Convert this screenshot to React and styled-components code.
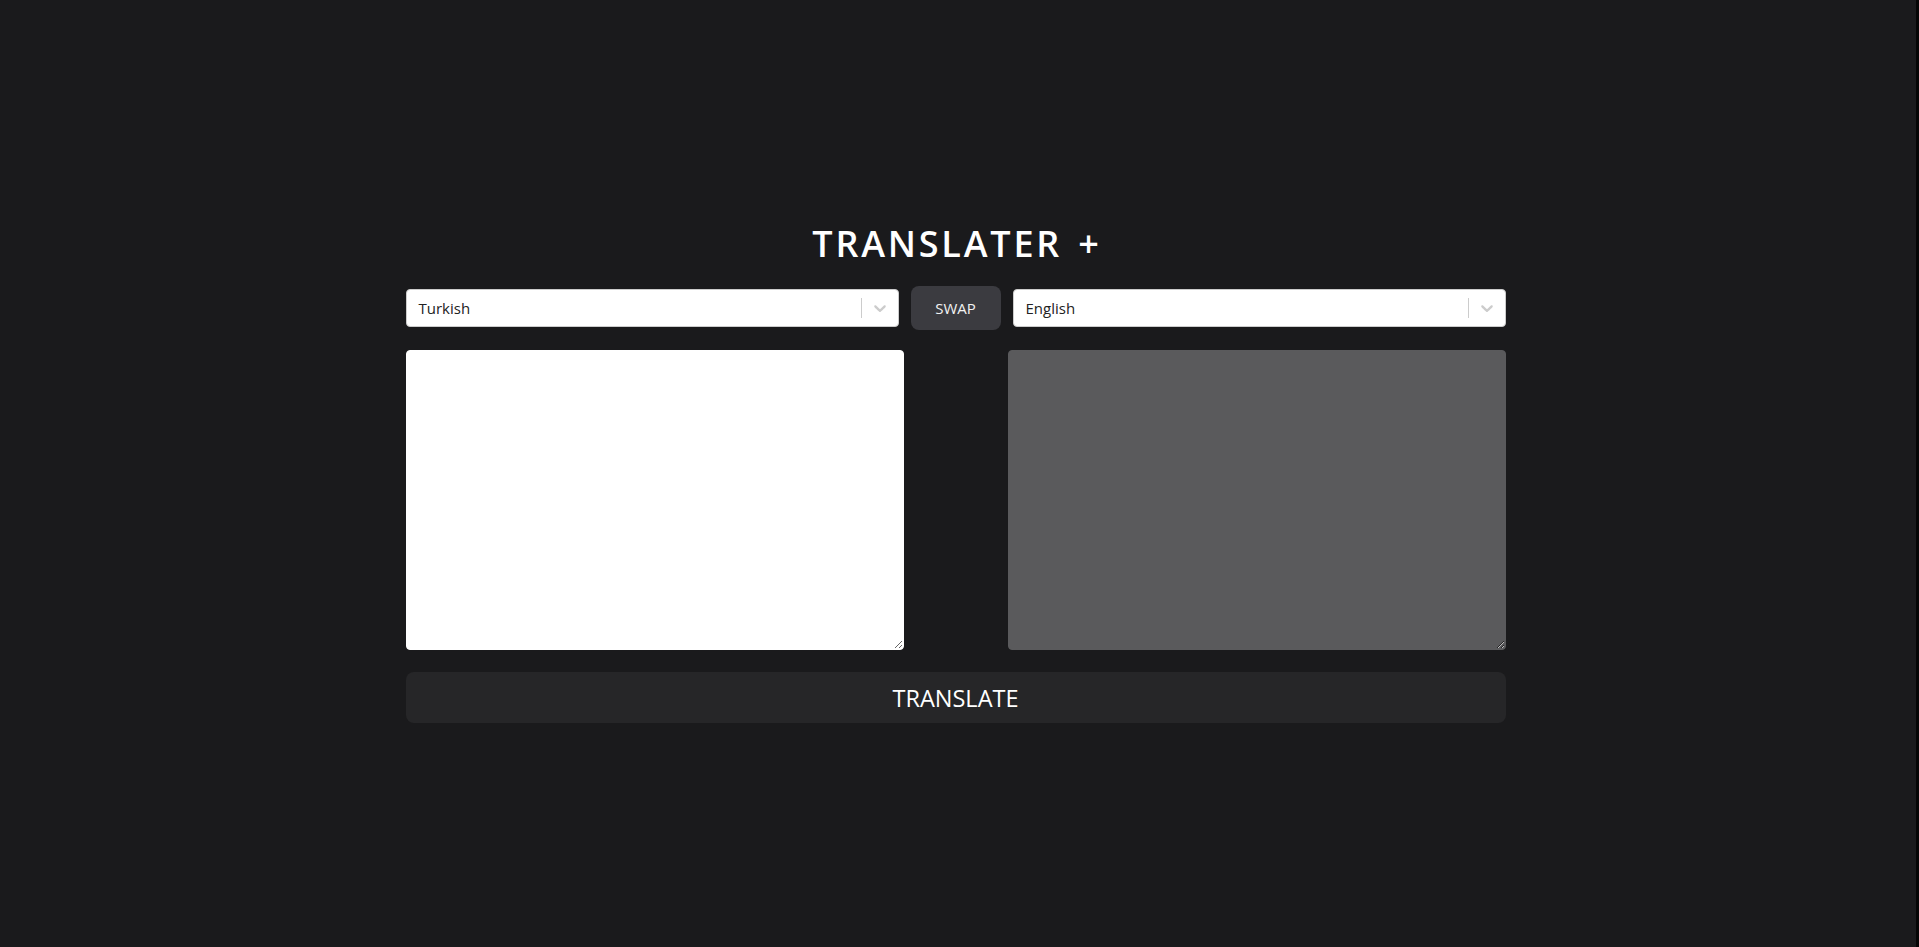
import React, { useState } from "react";
import styled, { createGlobalStyle } from "styled-components";

const GlobalStyle = createGlobalStyle`
  html, body {
    margin: 0;
    padding: 0;
    background: #1a1a1c;
    font-family: "Open Sans", "Liberation Sans", sans-serif;
  }
  * {
    box-sizing: border-box;
  }
`;

const languages = ["Turkish", "English", "German", "French", "Spanish"];

const ChevronIcon = () => (
  <svg height="20" width="20" viewBox="0 0 20 20" aria-hidden="true">
    <path
      fill="currentColor"
      d="M4.516 7.548c0.436-0.446 1.043-0.481 1.576 0l3.908 3.747 3.908-3.747c0.533-0.481 1.141-0.446 1.574 0 0.436 0.445 0.408 1.197 0 1.615-0.406 0.418-4.695 4.502-4.695 4.502-0.217 0.223-0.502 0.335-0.787 0.335s-0.57-0.112-0.789-0.335c0 0-4.287-4.084-4.695-4.502s-0.436-1.17 0-1.615z"
    />
  </svg>
);

// селект в стиле react-select
const LangSelect = ({ value }) => (
  <SelectBox>
    <SelectValue>{value}</SelectValue>
    <Indicators>
      <Separator />
      <Chevron>
        <ChevronIcon />
      </Chevron>
    </Indicators>
  </SelectBox>
);

const App = () => {
  const [source, setSource] = useState("Turkish");
  const [target, setTarget] = useState("English");
  const [text, setText] = useState("");

  const swapHandler = () => {
    setSource(target);
    setTarget(source);
  };

  return (
    <Page>
      <GlobalStyle />
      <Container>
        <Title>
          TRANSLATER<Plus>+</Plus>
        </Title>
        <SelectRow>
          <LangSelect value={source} options={languages} />
          <SwapButton onClick={swapHandler}>SWAP</SwapButton>
          <LangSelect value={target} options={languages} />
        </SelectRow>
        <AreaRow>
          <TextArea value={text} onChange={(e) => setText(e.target.value)} />
          <TextArea $disabled disabled value="" />
        </AreaRow>
        <TranslateButton>TRANSLATE</TranslateButton>
      </Container>
    </Page>
  );
};

export default App;

const Page = styled.div`
  min-height: 947px;
  display: flex;
  justify-content: center;
  padding: 215px 5px 0 0;
  border-right: 3px solid #050505;
`;

const Container = styled.div`
  width: 1100px;
  display: flex;
  flex-direction: column;
`;

const Title = styled.h1`
  margin: 0 0 22px;
  padding-top: 4px;
  height: 49px;
  text-align: center;
  color: #ffffff;
  font-size: 36px;
  font-weight: 600;
  letter-spacing: 2.8px;
  line-height: 49px;
`;

const Plus = styled.span`
  margin-left: 16px;
  letter-spacing: 0;
`;

const SelectRow = styled.div`
  display: flex;
  align-items: center;
  gap: 12px;
  height: 44px;
`;

const SelectBox = styled.div`
  flex: 1;
  display: flex;
  align-items: center;
  height: 38px;
  background: #ffffff;
  border: 1px solid #cccccc;
  border-radius: 4px;
  cursor: default;
`;

const SelectValue = styled.div`
  flex: 1;
  padding: 2px 10px 2px 12px;
  color: #222222;
  font-size: 15px;
`;

const Indicators = styled.div`
  display: flex;
  align-items: center;
  align-self: stretch;
`;

const Separator = styled.span`
  align-self: stretch;
  width: 1px;
  margin: 8px 0;
  background: #cccccc;
`;

const Chevron = styled.div`
  display: flex;
  padding: 8px;
  color: #cccccc;
`;

const SwapButton = styled.button`
  width: 90px;
  height: 44px;
  border: none;
  border-radius: 8px;
  background: #3b3b40;
  color: #f2f2f2;
  font-family: "Open Sans", "Liberation Sans", sans-serif;
  font-size: 15px;
  cursor: pointer;
`;

const AreaRow = styled.div`
  display: flex;
  justify-content: space-between;
  margin-top: 20px;
`;

const TextArea = styled.textarea`
  width: 498px;
  height: 300px;
  border: 1px solid ${(p) => (p.$disabled ? "#5a5a5c" : "#ffffff")};
  border-radius: 4px;
  background: ${(p) => (p.$disabled ? "#5a5a5c" : "#ffffff")};
  font-family: "Open Sans", "Liberation Sans", sans-serif;
  font-size: 15px;
  padding: 8px;
  outline: none;
`;

const TranslateButton = styled.button`
  margin-top: 22px;
  height: 51px;
  border: none;
  border-radius: 8px;
  background: #262628;
  color: #ffffff;
  font-family: "Open Sans", "Liberation Sans", sans-serif;
  font-size: 23.5px;
  cursor: pointer;
`;
